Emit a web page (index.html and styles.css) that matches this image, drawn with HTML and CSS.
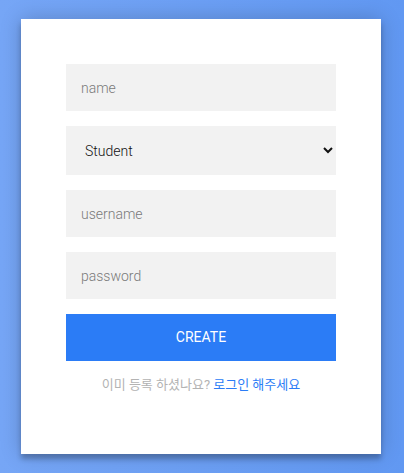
FILE: index.html
```html
<!DOCTYPE html>
<html lang="ko">
<head>
<meta charset="utf-8">
<link rel="stylesheet" href="styles.css">
</head>
<body>
<div class="page">
  <form class="form">
    <input class="field" type="text" placeholder="name">
    <select class="field select">
      <option>Student</option>
      <option>Teacher</option>
    </select>
    <input class="field" type="text" placeholder="username">
    <input class="field" type="password" placeholder="password">
    <button class="btn" type="button">create</button>
    <p class="message">이미 등록 하셨나요? <a href="#">로그인 해주세요</a></p>
  </form>
</div>
</body>
</html>
```
FILE: styles.css
```css
html, body {
  margin: 0;
  height: 100%;
}
body {
  background: linear-gradient(to right, #76a6f6, #6198f2);
  font-family: Roboto, "Noto Sans CJK KR", sans-serif;
}
.page {
  display: flex;
  justify-content: center;
  padding: 19px 2px 0 0;
}
.form {
  width: 270px;
  padding: 45px;
  background: #fff;
  box-shadow: 0 0 20px 0 rgba(0,0,0,0.2), 0 5px 5px 0 rgba(0,0,0,0.24);
  text-align: center;
}
.field {
  display: block;
  width: 100%;
  height: 47px;
  box-sizing: border-box;
  margin: 0 0 15px;
  padding: 15px;
  border: 0;
  outline: 0;
  background: #f2f2f2;
  font-family: Roboto, sans-serif;
  font-weight: 300;
  font-size: 14px;
  line-height: 17px;
  color: #333;
}
.field::placeholder {
  color: #7a7a7a;
}
.select {
  height: 49px;
  color: #111;
  font-weight: 300;
}
.btn {
  display: block;
  width: 100%;
  height: 47px;
  padding: 15px;
  border: 0;
  outline: 0;
  background: #2b7cf6;
  color: #fff;
  font-family: Roboto, sans-serif;
  font-weight: 400;
  font-size: 14px;
  line-height: 17px;
  text-transform: uppercase;
  cursor: pointer;
}
.message {
  margin: 16px 0 16px;
  color: #b3b3b3;
  font-size: 13px;
  line-height: 16px;
  font-weight: 400;
}
.message a {
  color: #2b7cf6;
  text-decoration: none;
}
```
